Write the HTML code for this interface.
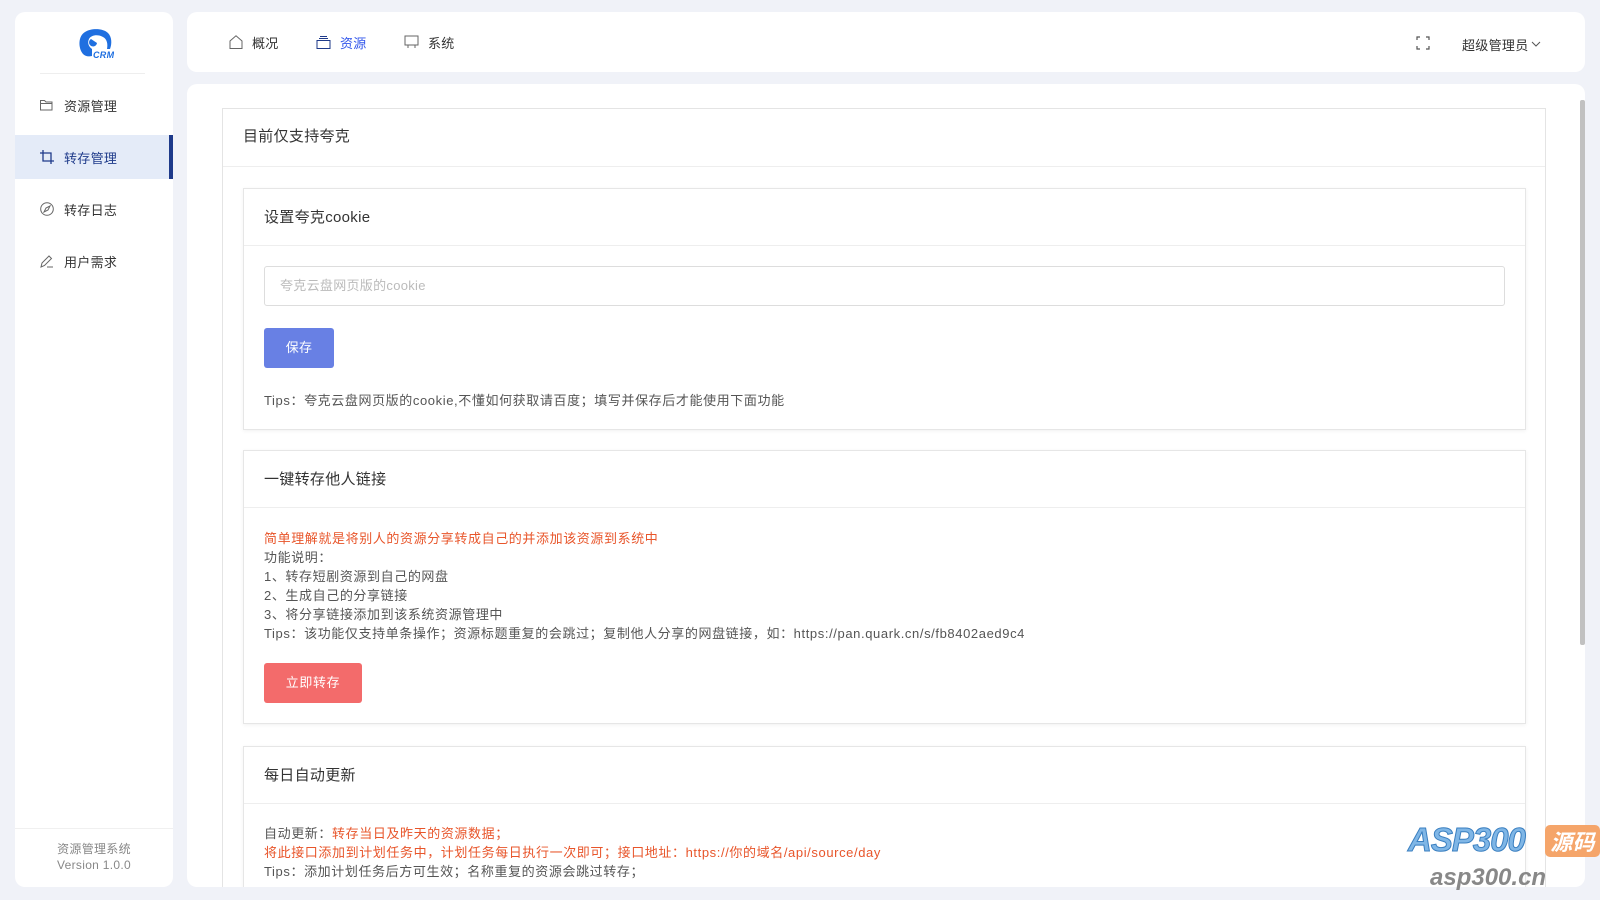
<!DOCTYPE html>
<html style="overflow:hidden"><head><meta charset="utf-8">
<style>
*{margin:0;padding:0;box-sizing:border-box}
html,body{width:1600px;height:900px;overflow:hidden}
body{background:#f0f2f8;font-family:"Liberation Sans","Noto Sans CJK SC",sans-serif;color:#333;position:relative;font-size:13px;letter-spacing:0.3px}
.abs{position:absolute}
.side{left:15px;top:12px;width:158px;height:875px;background:#fff;border-radius:10px}
.menu{position:absolute;left:0;width:158px;height:44px;display:flex;align-items:center;padding-left:25px;font-size:13px;color:#333}
.menu svg{margin-right:10px}
.menu.act{background:#e4ebf8;color:#1e3a8a;border-right:4px solid #1e3a8a}
.top{left:187px;top:12px;width:1398px;height:60px;background:#fff;border-radius:10px}
.nav{position:absolute;top:0;height:60px;display:flex;align-items:center;font-size:13px;color:#333}
.nav svg{margin-right:9px}
.main{left:187px;top:84px;width:1398px;height:803px;background:#fff;border-radius:10px;overflow:hidden}
.outer{position:absolute;left:35px;top:24px;width:1324px;height:779px;border:1px solid #e4e4e4;border-bottom:none;overflow:hidden}
.oh{height:58px;border-bottom:1px solid #eee;padding-left:20px;line-height:56px;font-size:15px;color:#333}
.card{position:absolute;left:20px;width:1283px;border:1px solid #e6e6e6;box-shadow:0 1px 4px rgba(0,0,0,.06);background:#fff;overflow:hidden}
.ch{height:57px;border-bottom:1px solid #eee;padding-left:20px;line-height:58px;font-size:15px;color:#333}
.cb{padding:0 20px;font-size:13px;color:#555}
.cb .l,.cb.l{letter-spacing:0.6px}
.red{color:#e8552a}
.btn{display:inline-block;color:#fff;border-radius:3px;text-align:center;font-size:13px}
</style></head><body>
<div class="abs side">
  <svg class="abs" style="left:62px;top:16px" width="37" height="32" viewBox="0 0 37 32">
    <path d="M6 26 C1 20 1 8 8 4 C14 0 26 0 31 5 C35 9 35 16 33 21 L30 21 C31 16 30 11 26 9 C21 6 14 7 12 11 C10 15 12 19 15 21 L15 28 C11 29 8 28 6 26Z" fill="#1f6fe0"/>
    <path d="M14 11 a4 4 0 1 0 6 4 l-3 -2z" fill="#1f6fe0"/>
    <text x="16" y="30" font-family="Liberation Sans" font-weight="bold" font-style="italic" font-size="9" fill="#1f6fe0">CRM</text>
  </svg>
  <div class="abs" style="left:25px;top:61px;width:105px;height:1px;background:#eee"></div>
  <div class="menu" style="top:71px"><svg width="14" height="12" viewBox="0 0 14 12" fill="none" stroke="#666" stroke-width="1"><path d="M.5 1.5h4l1.5 1.5h6v8h-11.5z M.5 4.5h12"/></svg>资源管理</div>
  <div class="menu act" style="top:123px"><svg width="14" height="14" viewBox="0 0 14 14" fill="none" stroke="#1e3a8a" stroke-width="1.3"><path d="M3 0v11h11 M0 3h11v11"/></svg>转存管理</div>
  <div class="menu" style="top:175px"><svg width="14" height="14" viewBox="0 0 14 14" fill="none" stroke="#666" stroke-width="1"><circle cx="7" cy="7" r="6.3"/><path d="M10 4l-4 2-2 4 4-2z"/></svg>转存日志</div>
  <div class="menu" style="top:227px"><svg width="14" height="14" viewBox="0 0 14 14" fill="none" stroke="#666" stroke-width="1"><path d="M1 13l1-4 7-7 2.5 2.5-7 7z M7 13h6"/></svg>用户需求</div>
  <div class="abs" style="left:0;top:816px;width:158px;height:1px;background:#f0f0f0"></div>
  <div class="abs" style="left:0;top:829px;width:158px;text-align:center;font-size:12px;color:#888;line-height:16px">资源管理系统<br>Version 1.0.0</div>
</div>
<div class="abs top">
  <div class="nav" style="left:42px"><svg width="14" height="14" viewBox="0 0 14 14" fill="none" stroke="#666"><path d="M1 13.5V6L7 .8 13 6v7.5z"/></svg>概况</div>
  <div class="nav" style="left:129px;color:#2f54eb"><svg width="15" height="13" viewBox="0 0 15 13" fill="none" stroke="#1e3a8a"><path d="M1 4.5h13v8H1z M3 2.5h9 M4 .5h7"/></svg>资源</div>
  <div class="nav" style="left:217px"><svg width="15" height="14" viewBox="0 0 15 14" fill="none" stroke="#666"><path d="M1 1h13v9H1z M4 10v3 M11 10v3"/></svg>系统</div>
  <svg class="abs" style="left:1229px;top:24px" width="14" height="14" viewBox="0 0 14 14" fill="none" stroke="#555" stroke-width="1.2"><path d="M1 4V1h3 M10 1h3v3 M13 10v3h-3 M4 13H1v-3"/></svg>
  <div class="nav" style="left:1275px;top:2px">超级管理员<svg width="10" height="6" viewBox="0 0 10 6" fill="none" stroke="#555" style="margin-left:2px"><path d="M1 1l4 4 4-4"/></svg></div>
</div>
<div class="abs main">
  <div class="outer">
    <div class="oh">目前仅支持夸克</div>
    <div class="card" style="top:79px;height:242px">
      <div class="ch">设置夸克cookie</div>
      <div class="cb">
        <div style="margin-top:20px;height:40px;border:1px solid #ddd;border-radius:3px;line-height:38px;padding-left:15px;color:#bbb">夸克云盘网页版的cookie</div>
        <div class="btn" style="margin-top:22px;width:70px;height:40px;line-height:40px;background:#6880e4">保存</div>
        <div class="l" style="margin-top:22px">Tips：夸克云盘网页版的cookie,不懂如何获取请百度；填写并保存后才能使用下面功能</div>
      </div>
    </div>
    <div class="card" style="top:341px;height:274px">
      <div class="ch">一键转存他人链接</div>
      <div class="cb l" style="line-height:19px;padding-top:21px">
        <div class="red">简单理解就是将别人的资源分享转成自己的并添加该资源到系统中</div>
        <div>功能说明：</div>
        <div>1、转存短剧资源到自己的网盘</div>
        <div>2、生成自己的分享链接</div>
        <div>3、将分享链接添加到该系统资源管理中</div>
        <div>Tips：该功能仅支持单条操作；资源标题重复的会跳过；复制他人分享的网盘链接，如：https://pan.quark.cn/s/fb8402aed9c4</div>
        <div class="btn" style="margin-top:20px;width:98px;height:40px;line-height:40px;background:#f36b6b">立即转存</div>
      </div>
    </div>
    <div class="card" style="top:637px;height:142px">
      <div class="ch">每日自动更新</div>
      <div class="cb l" style="line-height:19px;padding-top:20px">
        <div>自动更新：<span class="red">转存当日及昨天的资源数据；</span></div>
        <div class="red">将此接口添加到计划任务中，计划任务每日执行一次即可；接口地址：https://你的域名/api/source/day</div>
        <div>Tips：添加计划任务后方可生效；名称重复的资源会跳过转存；</div>
      </div>
    </div>
  </div>
  <div class="abs" style="left:1393px;top:16px;width:5px;height:545px;background:#c1c1c1;border-radius:2px"></div>
</div>
<div class="abs" style="left:1408px;top:822px;font:italic bold 33px 'Liberation Sans',sans-serif;color:#7fb6e6;-webkit-text-stroke:1px #3a7fc0;letter-spacing:-1px;line-height:36px">ASP300</div>
<div class="abs" style="left:1545px;top:825px;width:55px;height:32px;background:#f5a56a;border-radius:5px;color:#fff;font:italic bold 22px 'Noto Sans CJK SC',sans-serif;text-align:center;line-height:32px">源码</div>
<div class="abs" style="left:1430px;top:864px;font:italic bold 24px 'Liberation Sans',sans-serif;color:#888;letter-spacing:0;line-height:28px">asp300.cn</div>
</body></html>
